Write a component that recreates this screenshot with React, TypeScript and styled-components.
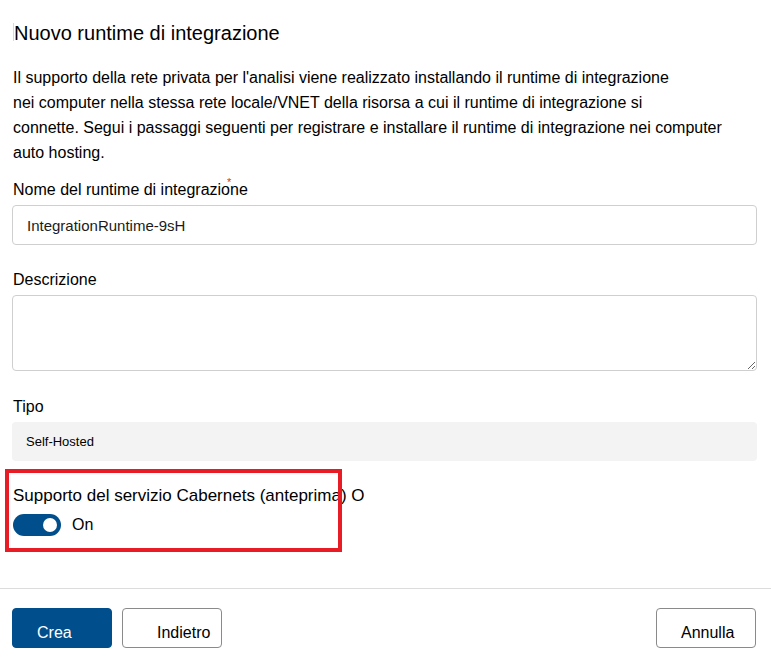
import React from "react";
import styled, { createGlobalStyle } from "styled-components";

const Global = createGlobalStyle`
  html, body { margin: 0; padding: 0; background: #ffffff; }
  body { font-family: "Liberation Sans", Arial, sans-serif; color: #1b1b1b; }
  * { box-sizing: border-box; }
`;

const Page = styled.div`
  width: 771px;
  height: 665px;
  display: flex;
  flex-direction: column;
  position: relative;
  overflow: hidden;
`;

const Body = styled.div`
  display: flex;
  flex-direction: column;
  padding: 21px 14px 0 12px;
`;

const Title = styled.h1`
  position: relative;
  margin: 0 0 20px 2px;
  font-size: 20px;
  line-height: 24px;
  font-weight: 400;
  color: #000;
  &::before {
    content: "";
    position: absolute;
    left: -1px;
    top: 2px;
    width: 1px;
    height: 18px;
    background: #d8d8d8;
  }
`;

const Intro = styled.p`
  margin: 0 0 15px 1px;
  font-size: 16px;
  line-height: 25px;
  color: #000;
`;

const Line = styled.span`
  display: block;
  white-space: nowrap;
`;

const Field = styled.div<{ $gap: number }>`
  display: flex;
  flex-direction: column;
  gap: 5px;
  margin-bottom: ${(p) => p.$gap}px;
`;

const Label = styled.label`
  position: relative;
  align-self: flex-start;
  font-size: 16px;
  line-height: 20px;
  padding-left: 1px;
  color: #000;
`;

const Required = styled.span`
  position: absolute;
  left: 215px;
  top: -4px;
  font-size: 11px;
  line-height: 12px;
  color: #d13438;
`;

const TextInput = styled.input`
  height: 40px;
  width: 745px;
  border: 1px solid #cfcfcf;
  border-radius: 4px;
  padding: 0 14px;
  font-family: "Liberation Sans", Arial, sans-serif;
  font-size: 15px;
  color: #1b1b1b;
  outline: none;
  background: #fff;
`;

const TextArea = styled.textarea`
  height: 76px;
  width: 745px;
  border: 1px solid #cfcfcf;
  border-radius: 4px;
  padding: 8px 14px;
  font-family: "Liberation Sans", Arial, sans-serif;
  font-size: 15px;
  resize: vertical;
  outline: none;
  display: block;
  background: #fff;
`;

const ReadOnlyBox = styled.div`
  height: 39px;
  width: 745px;
  background: #f3f3f3;
  border-radius: 4px;
  display: flex;
  align-items: center;
  padding-left: 14px;
  font-size: 13px;
  color: #000;
`;

const ToggleField = styled.div`
  display: flex;
  flex-direction: column;
  gap: 8px;
  padding-left: 1px;
`;

const ToggleLabel = styled.div`
  font-size: 17px;
  line-height: 20px;
  color: #000;
`;

const ToggleRow = styled.div`
  display: flex;
  align-items: center;
  gap: 11px;
  font-size: 16px;
  color: #000;
`;

const Track = styled.div<{ $on: boolean }>`
  width: 48px;
  height: 22px;
  border-radius: 11px;
  background: ${(p) => (p.$on ? "#004e8c" : "#ffffff")};
  display: flex;
  align-items: center;
  justify-content: ${(p) => (p.$on ? "flex-end" : "flex-start")};
  padding: 0 4px;
`;

const Knob = styled.div`
  width: 14px;
  height: 14px;
  border-radius: 50%;
  background: #ffffff;
`;

const Highlight = styled.div`
  position: absolute;
  left: 5px;
  top: 469px;
  width: 337px;
  height: 83px;
  border: 4px solid #e81c24;
  pointer-events: none;
`;

const Divider = styled.hr`
  margin: 52px 0 0 0;
  border: 0;
  border-top: 1px solid #dcdcdc;
  width: 771px;
`;

const Footer = styled.div`
  display: flex;
  align-items: center;
  gap: 10px;
  padding: 19px 15px 0 12px;
`;

const Button = styled.button<{ $primary?: boolean; $padLeft: number }>`
  width: 100px;
  height: 40px;
  border-radius: 4px;
  border: 1px solid ${(p) => (p.$primary ? "#004e8c" : "#8a8a8a")};
  background: ${(p) => (p.$primary ? "#004e8c" : "#ffffff")};
  color: ${(p) => (p.$primary ? "#ffffff" : "#000000")};
  font-family: "Liberation Sans", Arial, sans-serif;
  font-size: 16px;
  text-align: left;
  padding: 9px 0 0 ${(p) => p.$padLeft}px;
  cursor: pointer;
`;

const Spacer = styled.div`
  flex: 1;
`;

export default function App() {
  return (
    <Page>
      <Global />
      <Body>
        <Title>Nuovo runtime di integrazione</Title>
        <Intro>
          <Line>Il supporto della rete privata per l'analisi viene realizzato installando il runtime di integrazione</Line>
          <Line>nei computer nella stessa rete locale/VNET della risorsa a cui il runtime di integrazione si</Line>
          <Line>connette. Segui i passaggi seguenti per registrare e installare il runtime di integrazione nei computer</Line>
          <Line>auto hosting.</Line>
        </Intro>
        <Field $gap={25}>
          <Label>
            Nome del runtime di integrazione
            <Required>*</Required>
          </Label>
          <TextInput defaultValue="IntegrationRuntime-9sH" />
        </Field>
        <Field $gap={26}>
          <Label>Descrizione</Label>
          <TextArea />
        </Field>
        <Field $gap={25}>
          <Label>Tipo</Label>
          <ReadOnlyBox>Self-Hosted</ReadOnlyBox>
        </Field>
        <ToggleField>
          <ToggleLabel>Supporto del servizio Cabernets (anteprima) O</ToggleLabel>
          <ToggleRow>
            <Track $on>
              <Knob />
            </Track>
            On
          </ToggleRow>
        </ToggleField>
      </Body>
      <Divider />
      <Footer>
        <Button $primary $padLeft={24}>Crea</Button>
        <Button $padLeft={34}>Indietro</Button>
        <Spacer />
        <Button $padLeft={24}>Annulla</Button>
      </Footer>
      <Highlight />
    </Page>
  );
}
